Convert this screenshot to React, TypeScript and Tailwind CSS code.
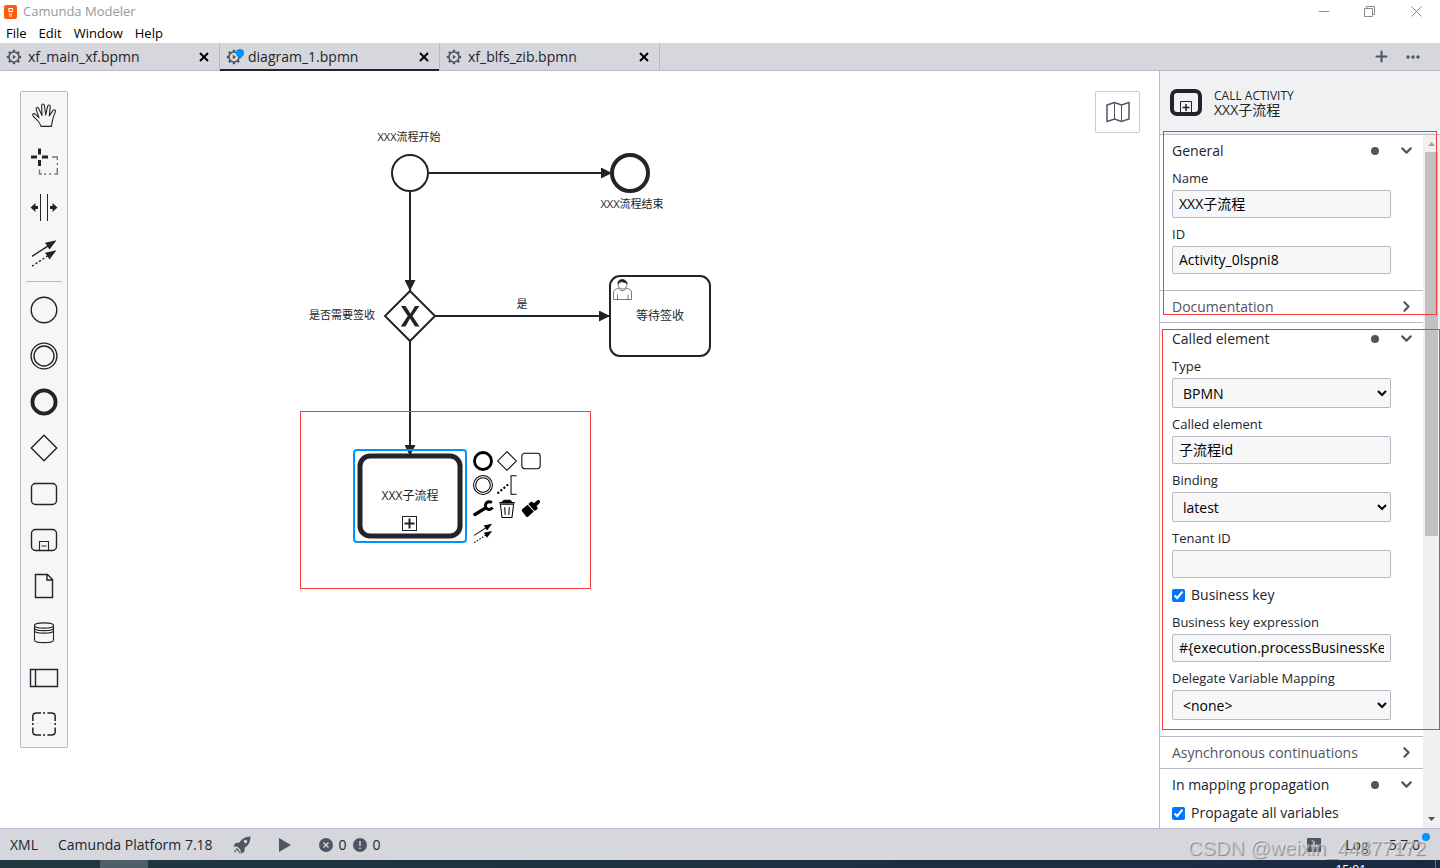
import { useId, type ReactNode } from "react";
import { ChevronDown, ChevronRight, Plus, X } from "lucide-react";

const INK = "#22242a";

function Icon({ size = 30, children }: { size?: number; children: ReactNode }) {
  return (
    <svg
      width={size}
      height={size}
      viewBox="0 0 30 30"
      fill="none"
      stroke="currentColor"
      strokeWidth="1.4"
      aria-hidden="true"
    >
      {children}
    </svg>
  );
}

const shapes = {
  hand: (
    <path
      strokeLinejoin="round"
      strokeWidth="1.1"
      d="M12 26.4 C11.2 24 10.4 22.6 9 21 C7.2 19 5.2 17.6 3.9 15.6 C3 13.8 4.9 13 6.3 14.2 L10 17.6 L7.2 9.6 C6.6 7.2 8.9 6.5 9.7 8.6 L13.1 15.4 L12.6 5.9 C12.6 3.6 15.1 3.4 15.4 5.7 L16.7 15 L18.6 6.4 C19.1 4.2 21.5 4.6 21.2 6.9 L20.3 15.9 L23.9 10.6 C25.2 8.9 27.2 9.9 26.3 11.9 L24.2 17.6 C23.2 21 22.9 23.4 22.4 26.4 Z"
    />
  ),
  lasso: (
    <>
      <path strokeWidth="3" d="M2 11h6M13 11h6M10.5 2.5v6M10.5 14v6" />
      <path stroke="#777" d="M23 11h5.3v3M28.3 17v2M28.3 22v6h-3M22 28h-2M17 28h-2M13 28h-2.5v-4.500" />
    </>
  ),
  space: (
    <>
      <path strokeWidth="1" d="M11.5 2v27M18.5 2v27" />
      <path
        fill="currentColor"
        stroke="none"
        d="M1.5 15.500l5-4.500v3h2.500v3h-2.500v3zM28.5 15.500l-5-4.500v3h-2.500v3h2.500v3z"
      />
    </>
  ),
  connect: (
    <>
      <path d="M3 18.300L20 7.300" />
      <path strokeDasharray="2.2 2" d="M3 28.200L20 17" />
      <path
        fill="currentColor"
        stroke="none"
        d="M27.500 2.300L20.500 11.500 16 4.800zM27.500 12.200L20.500 21.400 16 14.700z"
      />
    </>
  ),
  start: <circle cx="15" cy="15" r="12.8" />,
  intermediate: (
    <>
      <circle cx="15" cy="15" r="12.9" />
      <circle cx="15" cy="15" r="10" />
    </>
  ),
  end: <circle cx="15" cy="15" r="11.6" strokeWidth="3.8" />,
  gateway: <path d="M15 2.300L27.700 15 15 27.700 2.300 15z" />,
  task: <rect x="2.500" y="4.500" width="25" height="21" rx="4" />,
  subprocess: (
    <>
      <rect x="2.500" y="4.500" width="25" height="21" rx="4" />
      <path d="M10.500 25.500v-9h9v9M12.500 21h5" strokeWidth="1.1" />
    </>
  ),
  dataObject: <path d="M6.500 3.500h12l5 5v18h-17zM18 3.500v5.500h5.500" />,
  dataStore: (
    <path
      strokeWidth="1.1"
      d="M5.500 8.500v14.500c0 3.500 19 3.500 19 0v-14.500c0-3.500-19-3.500-19 0c0 3.500 19 3.500 19 0M5.500 11c0 3.500 19 3.500 19 0M5.500 13.500c0 3.500 19 3.500 19 0"
    />
  ),
  participant: <path d="M1.500 6.500h27v17h-27zM6.500 6.500v17" />,
  group: (
    <path
      strokeWidth="1.5"
      d="M3.800 12V7.500Q3.800 4 7.500 4H12M14 4h2M18.500 4H22.500Q26.200 4 26.200 7.500V12M26.200 14v2M26.200 18.500V22.500Q26.200 26 22.500 26H18.500M16 26h-2M12 26H7.500Q3.800 26 3.800 22.500V18.500M3.800 16v-2"
    />
  ),
  annotation: (
    <>
      <path strokeWidth="2.8" strokeDasharray="2.8 2.6" d="M2 26.500L17 14" />
      <path d="M28 2.500h-7.500v25H28" />
    </>
  ),
  wrench: (
    <>
      <path strokeWidth="4.5" strokeLinecap="round" d="M4 22.500L17 14.500" />
      <path strokeWidth="4" d="M27 6.500A5.200 5.200 0 1 0 28 13" />
    </>
  ),
  trash: (
    <>
      <path d="M6 8.500h18l-2.200 18h-13.600zM11.800 12.500l.8 10.500M18.200 12.500l-.8 10.500" />
      <path d="M4.500 6.500h21" strokeWidth="2" />
      <path d="M9 5h12l-2-2h-8z" fill="currentColor" />
    </>
  ),
  brush: (
    <g fill="currentColor" stroke="none">
      <path d="M3 15.500L10.300 9.200 18.800 18.400 11 25.500c-1 .8-2 .6-2.600-.2L2.800 18c-.6-.8-.6-1.800.2-2.500z" />
      <path d="M11.300 8.300l3.200-2.800c.8-.6 1.800-.6 2.500 0l2 1.800 4.200-4c2.500-2 5.500 1 3.600 3.400l-4.200 4.500 1.200 1.600c.5.8.5 1.700-.2 2.400l-3.800 2.400z" />
    </g>
  ),
};

type ShapeName = keyof typeof shapes;

const tools: [ShapeName, string][] = [
  ["hand", "Activate hand tool"],
  ["lasso", "Activate lasso tool"],
  ["space", "Activate create/remove space tool"],
  ["connect", "Activate global connect tool"],
];

const elements: [ShapeName, string][] = [
  ["start", "Create start event"],
  ["intermediate", "Create intermediate event"],
  ["end", "Create end event"],
  ["gateway", "Create gateway"],
  ["task", "Create task"],
  ["subprocess", "Create expanded sub process"],
  ["dataObject", "Create data object"],
  ["dataStore", "Create data store"],
  ["participant", "Create pool"],
  ["group", "Create group"],
];

const contextPad: ([ShapeName, string] | null)[] = [
  ["end", "Append end event"],
  ["gateway", "Append gateway"],
  ["task", "Append task"],
  ["intermediate", "Append intermediate event"],
  ["annotation", "Append text annotation"],
  null,
  ["wrench", "Change type"],
  ["trash", "Remove"],
  ["brush", "Set color"],
  ["connect", "Connect"],
];

function TitleBar() {
  return (
    <header className="flex h-[23px] shrink-0 items-center bg-white pl-1">
      <svg width="13" height="14" viewBox="0 0 13 14" aria-hidden="true">
        <rect width="13" height="14" rx="2" fill="#fc5d0d" />
        <path d="M8.500 5V3.500h-3.500v3h3.500V5.500M5 9h3M5 11h3" fill="none" stroke="#fff" strokeWidth="1.2" />
      </svg>
      <span className="ml-1.5 text-[13px] text-[#999]">Camunda Modeler</span>
      <div className="ml-auto flex items-center text-[#8c8c8c]">
        <button aria-label="Minimize" className="flex w-[46px] justify-center">
          <svg width="11" height="11" stroke="currentColor" fill="none"><path d="M0 5.500h10" /></svg>
        </button>
        <button aria-label="Restore" className="flex w-[45px] justify-center">
          <svg width="11" height="11" stroke="currentColor" fill="none">
            <path d="M.5 2.500h8v8h-8zM2.500 2.500v-2h8v8h-2" />
          </svg>
        </button>
        <button aria-label="Close" className="flex w-12 justify-center">
          <svg width="11" height="11" stroke="currentColor" fill="none"><path d="M.5.5l10 10M10.500.5l-10 10" /></svg>
        </button>
      </div>
    </header>
  );
}

function MenuBar() {
  return (
    <nav className="flex h-5 shrink-0 items-end gap-3 bg-white px-1.5 text-[13px] leading-[19px] text-black">
      {["File", "Edit", "Window", "Help"].map((item) => (
        <button key={item}>{item}</button>
      ))}
    </nav>
  );
}

const teeth = [0, 45, 90, 135, 180, 225, 270, 315];

function GearIcon() {
  return (
    <svg width="16" height="16" viewBox="0 0 16 16" fill="none" stroke="#505562" aria-hidden="true">
      <circle cx="8" cy="8" r="5" strokeWidth="1.6" />
      {teeth.map((angle) => (
        <path key={angle} d="M8 .8v2.200" strokeWidth="2.4" transform={`rotate(${angle} 8 8)`} />
      ))}
      <path d="M6.800 5.800v4.400L10 8z" fill="#505562" stroke="none" />
    </svg>
  );
}

function Tab({ name, active, dirty }: { name: string; active?: boolean; dirty?: boolean }) {
  return (
    <div
      className={`flex h-7 w-[220px] items-center border-r border-[#b8b8c6] pr-2 pl-1.5 ${
        active ? "shadow-[inset_0_-2px_0_#22242a]" : "shadow-[inset_0_-1px_0_#b8b8c6]"
      }`}
    >
      <span className="relative">
        <GearIcon />
        {dirty && <span className="absolute top-0 -right-0.5 size-2 rounded-full bg-[#0093ff]" />}
      </span>
      <button className="ml-1.5 text-sm">{name}</button>
      <button aria-label={`Close ${name}`} className="ml-auto text-black">
        <X size={14} strokeWidth={3.2} />
      </button>
    </div>
  );
}

function TabBar() {
  return (
    <div className="flex h-7 shrink-0 bg-[#d5d7dd]">
      <Tab name="xf_main_xf.bpmn" />
      <Tab name="diagram_1.bpmn" active dirty />
      <Tab name="xf_blfs_zib.bpmn" />
      <div className="flex flex-1 items-center justify-end gap-4 border-b border-[#b8b8c6] pr-5 text-[#505562]">
        <button aria-label="New file">
          <Plus size={17} strokeWidth={3} />
        </button>
        <button aria-label="More tabs">
          <svg width="14" height="4" fill="currentColor">
            <circle cx="2" cy="2" r="1.7" />
            <circle cx="7" cy="2" r="1.7" />
            <circle cx="12" cy="2" r="1.7" />
          </svg>
        </button>
      </div>
    </div>
  );
}

function PaletteButton({ shape, title }: { shape: ShapeName; title: string }) {
  return (
    <button aria-label={title} className="flex size-[46px] items-center justify-center">
      <Icon>{shapes[shape]}</Icon>
    </button>
  );
}

function Palette() {
  return (
    <div className="absolute top-5 left-5 flex flex-col rounded-xs border border-[#b8b8c6] bg-[#f6f6f6]">
      {tools.map(([shape, title]) => (
        <PaletteButton key={shape} shape={shape} title={title} />
      ))}
      <hr className="mx-[5px] my-[5px] border-[#b8b8c6]" />
      {elements.map(([shape, title]) => (
        <PaletteButton key={shape} shape={shape} title={title} />
      ))}
    </div>
  );
}

function Diagram() {
  return (
    <svg className="absolute inset-0 size-full" fill="none" stroke={INK} strokeWidth="2">
      <defs>
        <marker
          id="flow-end"
          viewBox="0 0 11 11"
          refX="11"
          refY="5.5"
          markerWidth="11"
          markerHeight="11"
          markerUnits="userSpaceOnUse"
          orient="auto"
        >
          <path d="M0 0L11 5.500 0 11z" fill={INK} stroke="none" />
        </marker>
      </defs>
      <circle cx="410" cy="102" r="18" />
      <circle cx="630" cy="102" r="18" strokeWidth="4" />
      <path d="M410 220l25 25-25 25-25-25z" />
      {/* exclusive gateway marker */}
      <path d="M401 235h4.500l5 7.500 4.500-7.500h4.500l-7 10 7 10.500h-4.500l-5-8-4.500 8h-4.800l7-10.500z" fill={INK} stroke="none" />
      <rect x="610" y="205" width="100" height="80" rx="10" />
      <path d="M428 102h184" markerEnd="url(#flow-end)" />
      <path d="M410 120v100" markerEnd="url(#flow-end)" />
      <path d="M435 245h175" markerEnd="url(#flow-end)" />

      {/* user task marker */}
      <g strokeWidth=".6">
        <path d="M613.500 228.500v-7.500c0-2 3-3.200 5-4 1.500 3.500 6.500 3.500 8 0 2 .8 5 2 5 4v7.500zM617.500 228.500v-5M628 228.500v-5" />
        <circle cx="622.500" cy="213.500" r="4.500" />
        <path d="M618 213c-1-6 9-6 9 0-2-2-3-1.500-4.500-2-1.500-.5-3 .5-4.500 2z" fill={INK} />
      </g>

      <rect x="360" y="385" width="100" height="80" rx="10" strokeWidth="5" />
      <path d="M410 270v115" markerEnd="url(#flow-end)" />
      <rect x="402.500" y="445.500" width="14" height="14" strokeWidth="1" />
      <path d="M404.500 452.500h10M409.500 447.500v10" />
      <rect x="354" y="379" width="112" height="92" rx="3" stroke="#0093ff" />

      <g fill={INK} stroke="none" textAnchor="middle" fontSize="11">
        <text x="409" y="70">XXX流程开始</text>
        <text x="632" y="137">XXX流程结束</text>
        <text x="342" y="248">是否需要签收</text>
        <text x="522" y="237">是</text>
        <text x="660" y="249" fontSize="12">等待签收</text>
        <text x="410" y="429" fontSize="12">XXX子流程</text>
      </g>
    </svg>
  );
}

function Canvas() {
  return (
    <main className="relative min-w-0 flex-1 overflow-hidden bg-white text-[#22242a]">
      <Diagram />
      <div className="absolute top-[378px] left-[471px] grid grid-cols-3 text-black">
        {contextPad.map((entry) =>
          entry ? (
            <button key={entry[0]} aria-label={entry[1]} className="flex size-6 items-center justify-center">
              <Icon size={22}>{shapes[entry[0]]}</Icon>
            </button>
          ) : (
            <span key="gap" />
          )
        )}
      </div>
      <div className="absolute top-[340px] left-[300px] h-[178px] w-[291px] border border-[#f53b3b]" />
      <Palette />
      <button
        aria-label="Toggle minimap"
        className="absolute top-5 right-[19px] flex h-[42px] w-[45px] items-center justify-center rounded-xs border border-[#ccc] bg-white text-[#505562]"
      >
        <svg width="24" height="22" fill="none" stroke="currentColor" strokeWidth="1.5" aria-hidden="true">
          <path d="M1 4L8.500 1.500 15.500 4 23 1.500V18L15.500 20.500 8.500 18 1 20.500z" />
          <path d="M8.500 1.500V18M15.500 4v16.500" strokeWidth="1" />
        </svg>
      </button>
    </main>
  );
}

function Group({
  title,
  filled,
  children,
}: {
  title: string;
  filled?: boolean;
  children?: ReactNode;
}) {
  return (
    <section className="border-b border-[#b8b8c6]">
      <button className="flex h-[31px] w-full items-center pr-2 pl-3 text-left text-sm">
        <span className={children ? "font-medium text-[#22242a]" : "text-[#505562]"}>{title}</span>
        {filled && <span className="mr-[19px] ml-auto size-2 rounded-full bg-[#505562]" />}
        <span className={filled ? "text-[#505562]" : "ml-auto text-[#505562]"}>
          {children ? <ChevronDown size={17} strokeWidth={3} /> : <ChevronRight size={17} strokeWidth={3} />}
        </span>
      </button>
      {children && <div className="pr-8 pb-3 pl-3">{children}</div>}
    </section>
  );
}

const fieldClass = "block w-full rounded-xs border border-[#b8b8c6] bg-[#f7f7f8] text-sm text-black";

function TextField({ label, value = "" }: { label: string; value?: string }) {
  const id = useId();
  return (
    <div className="pt-0.5 pb-1">
      <label htmlFor={id} className="mb-0.5 block text-[13px] leading-5">{label}</label>
      <input id={id} type="text" defaultValue={value} className={`${fieldClass} h-7 px-1.5 pb-0.5`} />
    </div>
  );
}

function SelectField({ label, value }: { label: string; value: string }) {
  const id = useId();
  return (
    <div className="pt-0.5 pb-1">
      <label htmlFor={id} className="mb-0.5 block text-[13px] leading-5">{label}</label>
      <select id={id} className={`${fieldClass} h-[30px] pl-1.5`}>
        <option>{value}</option>
      </select>
    </div>
  );
}

function CheckboxField({ label }: { label: string }) {
  return (
    <label className="flex h-7 items-center pb-0.5 text-sm">
      <input type="checkbox" defaultChecked className="mr-1.5 size-[13px] accent-[#0075ff]" />
      {label}
    </label>
  );
}

function Scrollbar() {
  return (
    <div className="flex w-[17px] shrink-0 flex-col items-center bg-[#f0f0f0]" aria-hidden="true">
      <svg width="17" height="17" fill="#a3a3a3"><path d="M5 11h7L8.500 7z" /></svg>
      <div className="h-[384px] w-[13px] bg-[#c1c1c1]" />
      <svg width="17" height="17" fill="#505050" className="mt-auto"><path d="M5 6h7l-3.500 4z" /></svg>
    </div>
  );
}

function PropertiesPanel() {
  return (
    <aside className="relative flex w-[281px] shrink-0 flex-col border-l border-[#b8b8c6] bg-white text-[#22242a]">
      <div className="flex h-16 shrink-0 items-center border-b border-[#b8b8c6] bg-[#f0f1f3] pl-2.5">
        <svg width="32" height="27" fill="none" stroke="currentColor" aria-hidden="true">
          <rect x="2" y="2" width="28" height="23" rx="5" strokeWidth="4" />
          <path d="M10.500 24v-11.500h11v11.500" strokeWidth="1" />
          <path d="M12.500 18.500h7M16 15v7" strokeWidth="1.5" />
        </svg>
        <div className="ml-3 leading-[14px]">
          <div className="text-xs leading-[14px] font-medium uppercase">Call activity</div>
          <div className="text-sm leading-[14px]">XXX子流程</div>
        </div>
      </div>

      <div className="flex min-h-0 flex-1">
        <div className="min-w-0 flex-1 overflow-hidden">
          <Group title="General" filled>
            <TextField label="Name" value="XXX子流程" />
            <TextField label="ID" value="Activity_0lspni8" />
          </Group>
          <Group title="Documentation" />
          <Group title="Called element" filled>
            <SelectField label="Type" value="BPMN" />
            <TextField label="Called element" value="子流程id" />
            <SelectField label="Binding" value="latest" />
            <TextField label="Tenant ID" />
            <CheckboxField label="Business key" />
            <TextField label="Business key expression" value="#{execution.processBusinessKey}" />
            <SelectField label="Delegate Variable Mapping" value="<none>" />
          </Group>
          <Group title="Asynchronous continuations" />
          <Group title="In mapping propagation" filled>
            <CheckboxField label="Propagate all variables" />
          </Group>
        </div>
        <Scrollbar />
      </div>

      <div className="pointer-events-none absolute top-[60px] left-[3px] h-[184px] w-[274px] border border-[#f53b3b]" />
      <div className="pointer-events-none absolute top-[258px] left-0.5 h-[401px] w-[278px] border border-[#f53b3b]" />
    </aside>
  );
}

function StatusBar() {
  return (
    <footer className="relative flex h-8 shrink-0 items-center border-t border-[#b8b8c6] bg-[#d5d7dd] pl-2.5 text-sm text-[#22242a]">
      <button>XML</button>
      <button className="ml-5">Camunda Platform 7.18</button>
      <button aria-label="Deploy" className="ml-5 text-[#505562]">
        <svg width="18" height="18" viewBox="0 0 18 18" fill="currentColor" aria-hidden="true">
          <path
            fillRule="evenodd"
            d="M17.500.5C12 .8 8.500 3 6.500 6.500L2.500 7 .5 10.500l4 .2 3 3 .3 4 3.500-2 .5-4C15.500 9.500 17.300 6 17.500.5zM12.500 3.800a1.700 1.700 0 1 1 0 3.400 1.700 1.700 0 0 1 0-3.400z"
          />
          <path d="M3.800 12l2.400 2.400-1 1-2.400-2.400zM1.800 13.500l1.500 1.500-2 2z" />
          <path d="M5 16l1.500-1 .5 2.500z" />
        </svg>
      </button>
      <button aria-label="Start instance" className="ml-7 text-[#505562]">
        <svg width="12" height="14" fill="currentColor"><path d="M0 0l12 7-12 7z" /></svg>
      </button>
      <button className="ml-7 flex items-center gap-1.5">
        <svg width="14" height="14" aria-label="Errors">
          <circle cx="7" cy="7" r="7" fill="#505562" />
          <path d="M4.500 4.500l5 5M9.500 4.500l-5 5" stroke="#d5d7dd" strokeWidth="1.4" />
        </svg>
        <span>0</span>
        <svg width="14" height="14" aria-label="Warnings">
          <circle cx="7" cy="7" r="7" fill="#505562" />
          <path d="M7 3v5M7 9.500v1.500" stroke="#d5d7dd" strokeWidth="1.4" />
        </svg>
        <span>0</span>
      </button>
      <div className="ml-auto flex items-center pr-5">
        <button aria-label="Notifications">
          <svg width="14" height="14">
            <rect width="14" height="14" rx="1" fill="#505562" />
            <path d="M7 3v8M4 8h6" stroke="#d5d7dd" strokeWidth="1.5" />
          </svg>
        </button>
        <button className="ml-6">Log</button>
        <button className="relative ml-5">
          5.7.0
          <span className="absolute -top-0.5 -right-2.5 size-2 rounded-full bg-[#0093ff]" />
        </button>
      </div>
      <span className="pointer-events-none absolute right-3.5 bottom-0 font-['Liberation_Sans'] text-[20px] leading-6 whitespace-nowrap text-white/40 [text-shadow:1px_1px_1px_#888]">
        CSDN @weixin_44877172
      </span>
    </footer>
  );
}

function Taskbar() {
  return (
    <div className="relative flex h-2 shrink-0 overflow-hidden bg-linear-to-r from-[#203840] to-[#1a2a42]">
      <div className="ml-[100px] h-full w-12 bg-[#4d6067]" />
      <span className="mt-1 mr-[74px] ml-auto text-xs leading-3 text-white">15:01</span>
      <div className="absolute right-1 h-full border-l border-[#6b7686]" />
    </div>
  );
}

export default function App() {
  return (
    <div className="flex h-screen flex-col overflow-hidden bg-white font-['Open_Sans','Noto_Sans_CJK_SC',sans-serif] text-[#22242a]">
      <TitleBar />
      <MenuBar />
      <TabBar />
      <div className="flex min-h-0 flex-1">
        <Canvas />
        <PropertiesPanel />
      </div>
      <StatusBar />
      <Taskbar />
    </div>
  );
}
